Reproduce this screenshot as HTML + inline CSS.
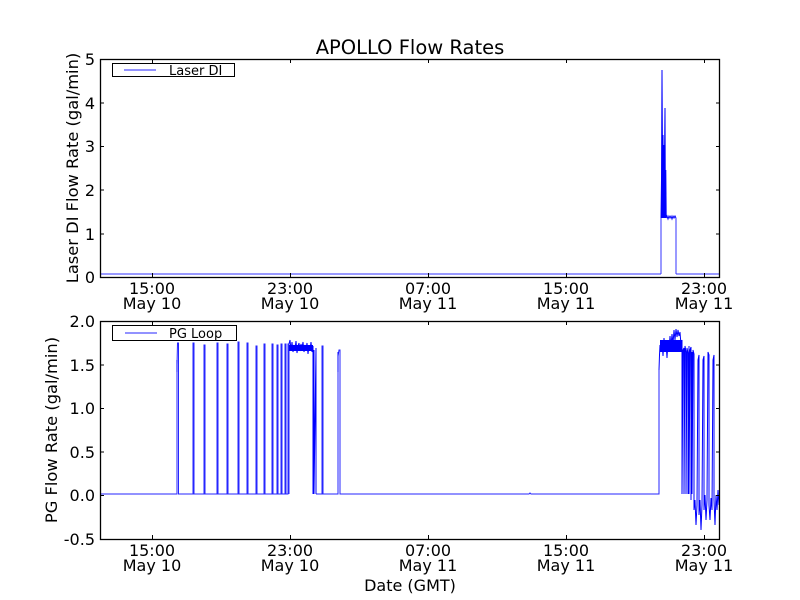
<!DOCTYPE html>
<html><head><meta charset="utf-8"><style>
html,body{margin:0;padding:0;background:#fff;}
svg{display:block;font-family:"DejaVu Sans","Liberation Sans",sans-serif;}
</style></head><body>
<svg width="800" height="600" viewBox="0 0 800 600" xmlns="http://www.w3.org/2000/svg">
<rect width="800" height="600" fill="#fff"/>
<text x="410" y="54" font-size="19.5" text-anchor="middle" fill="#000">APOLLO Flow Rates</text>

<!-- TOP PLOT data -->
<g fill="none" stroke="#0000ff" stroke-width="1">
<path stroke-opacity="0.8" d="M100,274 H661 M676,274 H720 M661,274 V218 M676,218 V274"/>
<path d="M661,218 L661.5,180 L662,70 L662.5,160 L663,135 L663.4,218 L663.8,145 L664.2,200 L664.6,150 L665,108 L665.4,218 L665.8,170 L666.2,218 L667,216 L668,219 L669,216 L670,218 L671,216 L672,219 L673,216 L674,218 L675,216 L676,218"/>
<rect x="661.5" y="145" width="3.5" height="73" fill="#0000ff" stroke="none"/>
</g>
<!-- top axes -->
<g stroke="#000" stroke-width="1" fill="none">
<rect x="100.5" y="59.5" width="619" height="218" stroke-width="1.3"/>
<path d="M100,234 h4 M100,190 h4 M100,146.5 h4 M100,103 h4 M720,234 h-4 M720,190 h-4 M720,146.5 h-4 M720,103 h-4
M152.5,277 v-4 M290.5,277 v-4 M428.5,277 v-4 M566.5,277 v-4 M704.5,277 v-4
M152.5,59 v4 M290.5,59 v4 M428.5,59 v4 M566.5,59 v4 M704.5,59 v4"/>
</g>
<g font-size="16" fill="#000" text-anchor="end">
<text x="95" y="65">5</text><text x="95" y="109">4</text><text x="95" y="152">3</text>
<text x="95" y="196">2</text><text x="95" y="240">1</text><text x="95" y="283">0</text>
</g>
<g font-size="16" fill="#000" text-anchor="middle">
<text x="152" y="294">15:00</text><text x="152" y="309">May 10</text>
<text x="290" y="294">23:00</text><text x="290" y="309">May 10</text>
<text x="428" y="294">07:00</text><text x="428" y="309">May 11</text>
<text x="566" y="294">15:00</text><text x="566" y="309">May 11</text>
<text x="704" y="294">23:00</text><text x="704" y="309">May 11</text>
</g>
<text transform="translate(78,168) rotate(-90)" font-size="16.3" text-anchor="middle">Laser DI Flow Rate (gal/min)</text>
<rect x="112.5" y="63.5" width="122" height="13" fill="#fff" stroke="#000"/>
<line x1="124" y1="70" x2="156" y2="70" stroke="#0000ff" stroke-opacity="0.85"/>
<text x="169" y="75" font-size="13">Laser DI</text>

<!-- BOTTOM PLOT data -->
<g fill="none" stroke="#0000ff" stroke-width="1">
<path stroke-opacity="0.85" d="M100,494 H177 V365 L177.5,343 H178.5 V494 H193 V343 H194 V494 H204 V345 H205 V494 H217 V343 H218 V494 H227 V344 H228 V494 H238 V342 H239 V494 H247 V343 H248 V494 H256 V346 H257 V494 H264 V344 H265 V494 H272 V344 H273 V494 H277 V345 H278 V494 H281 V344 H282 V494 H285 V344 H286 V494 H288 V344 H289 V494 M313,494 V346 M314,494 V350 M316,494 V348 M316,494 H322 V346 H323 V494 H338 V356 L339,350 H340 V494 H529 L530,493 L531,494 H659 V370"/>
<path d="M289,344 L290,340 L291,350 L292,342 L293,352 L294,345 L295,349 L296,341 L297,353 L298,346 L299,343 L300,351 L301,344 L302,348 L303,342 L304,352 L305,345 L306,350 L307,343 L308,354 L309,346 L310,350 L311,342 L312,352 L313,346 V494 L314,350 V494 L316,348 V494"/>
<rect x="289" y="345" width="24" height="6" fill="#0000ff" stroke="none"/>
<path d="M177,372 V360 M338,372 V352"/>
<path d="M659,370 L659.5,355 L660,345 L661,350 L662,340 L663,356 L664,338 L665,352 L666,342 L667,358 L668,340 L669,350 L670,336 L671,346 L672,334 L673,344 L674,330 L675,340 L676,329 L677,337 L678,330 L679,336 L680,332 L681,345 L682,340 V494 L683,350 L684,348 V494 L685,346 L686,352 V494 L687,348 L688,353 V494 L689,346 V494 L690,350 L691,347 V500 L692,352 V494 L693,350 L694,354 V510 L695,500 L696,525 L697,505 L698,360 L699,355 V515 L700,500 L701,530 L702,505 L703,360 L704,356 V510 L705,495 L706,520 L707,500 L708,352 L709,355 V505 L710,520 L711,498 L712,510 L713,360 L714,355 V500 L715,525 L716,495 L717,510 L718,490 L719,505"/>
<rect x="660" y="340" width="22" height="12" fill="#0000ff" stroke="none"/>
</g>
<!-- bottom axes -->
<g stroke="#000" stroke-width="1" fill="none">
<rect x="100.5" y="321.5" width="619" height="218" stroke-width="1.3"/>
<path d="M100,495.5 h4 M100,452 h4 M100,408.5 h4 M100,365 h4 M720,495.5 h-4 M720,452 h-4 M720,408.5 h-4 M720,365 h-4
M152.5,539 v-4 M290.5,539 v-4 M428.5,539 v-4 M566.5,539 v-4 M704.5,539 v-4
M152.5,321 v4 M290.5,321 v4 M428.5,321 v4 M566.5,321 v4 M704.5,321 v4"/>
</g>
<g font-size="16" fill="#000" text-anchor="end">
<text x="95" y="327">2.0</text><text x="95" y="371">1.5</text><text x="95" y="414">1.0</text>
<text x="95" y="458">0.5</text><text x="95" y="501">0.0</text><text x="95" y="545">-0.5</text>
</g>
<g font-size="16" fill="#000" text-anchor="middle">
<text x="152" y="556">15:00</text><text x="152" y="571">May 10</text>
<text x="290" y="556">23:00</text><text x="290" y="571">May 10</text>
<text x="428" y="556">07:00</text><text x="428" y="571">May 11</text>
<text x="566" y="556">15:00</text><text x="566" y="571">May 11</text>
<text x="704" y="556">23:00</text><text x="704" y="571">May 11</text>
<text x="410" y="591">Date (GMT)</text>
</g>
<text transform="translate(57,430) rotate(-90)" font-size="16.3" text-anchor="middle">PG Flow Rate (gal/min)</text>
<rect x="112.5" y="325.5" width="124" height="15" fill="#fff" stroke="#000"/>
<line x1="125" y1="333" x2="157" y2="333" stroke="#0000ff" stroke-opacity="0.85"/>
<text x="169" y="338" font-size="13">PG Loop</text>
</svg>
</body></html>
